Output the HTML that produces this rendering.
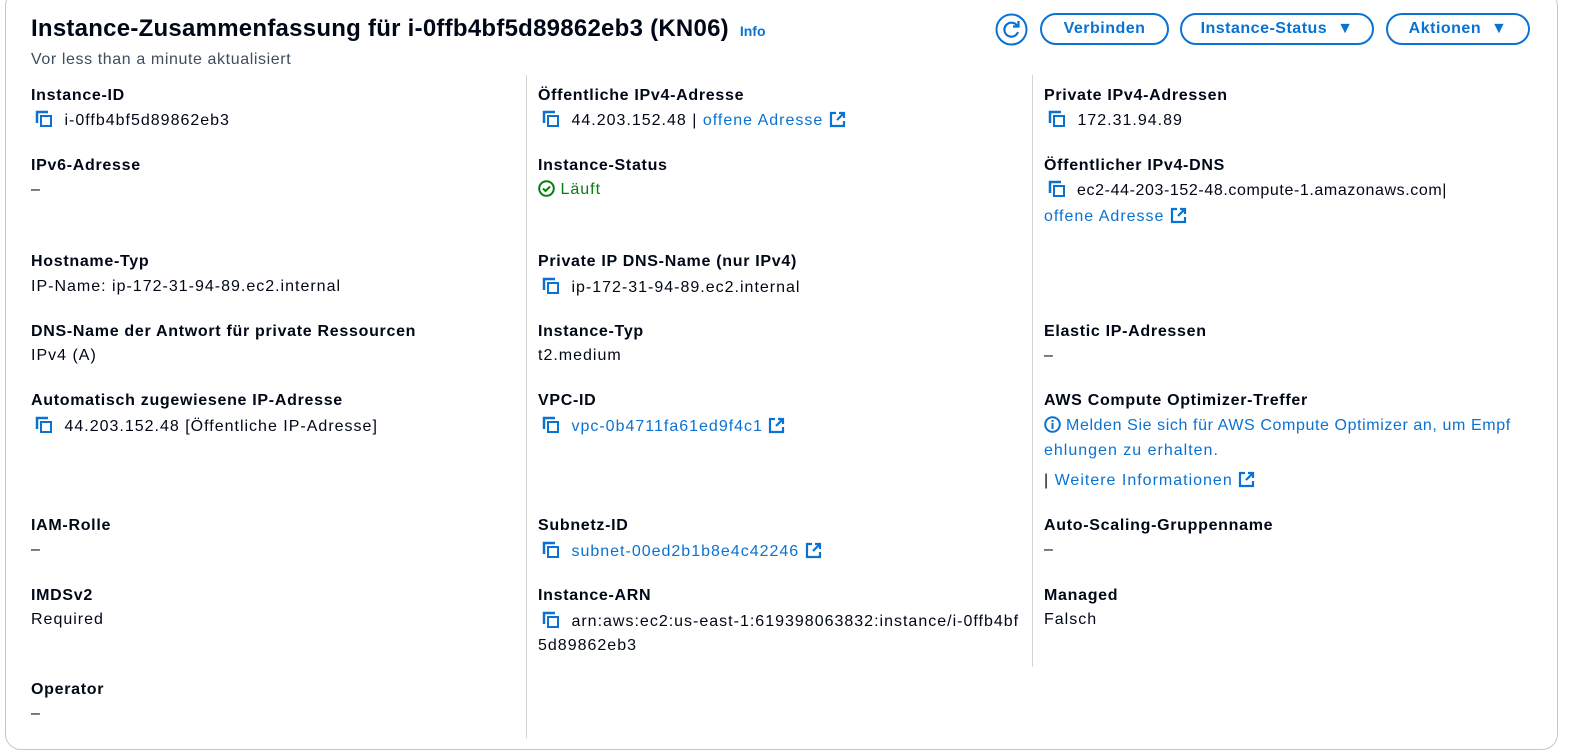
<!DOCTYPE html>
<html><head><meta charset="utf-8"><style>
body{margin:0;width:1574px;height:754px;background:#fff;font-family:"Liberation Sans",sans-serif;color:#000716;position:relative;overflow:hidden}
.card{position:absolute;left:5px;top:-10px;width:1553px;height:760px;border:1px solid #c6c6cd;border-radius:16px;box-sizing:border-box}
.a{position:absolute;white-space:nowrap;font-size:16px;line-height:20px;letter-spacing:1px}
.l{font-weight:bold;letter-spacing:0.7px}
.b{color:#0972d3}
.div{position:absolute;width:1px;background:#d5d5d9}
.btn{position:absolute;top:13px;height:32px;border:2px solid #0972d3;border-radius:18px;box-sizing:border-box;color:#0972d3;font-weight:bold;font-size:16px;letter-spacing:0.5px;line-height:28px;text-align:center}
svg{vertical-align:-3px}
.c{margin-right:6px}
</style></head><body>
<div class="card"></div>
<div class="a" style="left:31px;top:14px;font-size:24px;letter-spacing:0.25px;line-height:30px;font-weight:bold">Instance-Zusammenfassung für i-0ffb4bf5d89862eb3 (KN06) <span style="font-size:14px;letter-spacing:0;color:#0972d3;margin-left:4px">Info</span></div>
<div class="a" style="left:31px;top:50px;color:#414d5c;letter-spacing:0.6px">Vor less than a minute aktualisiert</div>

<svg style="position:absolute;left:995px;top:13px" width="33" height="33" viewBox="0 0 33 33"><circle cx="16.5" cy="16.5" r="15" fill="none" stroke="#0972d3" stroke-width="2"/><path d="M22 12.5A7 7 0 1 0 23 19" fill="none" stroke="#0972d3" stroke-width="2.2"/><path d="M23.5 8v5.5H18" fill="none" stroke="#0972d3" stroke-width="2.2"/></svg>
<div class="btn" style="left:1040px;width:129px">Verbinden</div>
<div class="btn" style="left:1180px;width:194px">Instance-Status&nbsp; ▼</div>
<div class="btn" style="left:1386px;width:144px">Aktionen&nbsp; ▼</div>

<div class="div" style="left:526px;top:75px;height:663px"></div>
<div class="div" style="left:1032px;top:75px;height:592px"></div>

<!-- col1 -->
<div class="a l" style="left:31px;top:86px">Instance-ID</div>
<div class="a" style="left:35px;top:110px"><svg class="c" width="18" height="18" viewBox="0 0 18 18"><path d="M2 13V2h11" fill="none" stroke="#0972d3" stroke-width="2.5"/><rect x="6" y="6" width="10" height="10" fill="none" stroke="#0972d3" stroke-width="2"/></svg> i-0ffb4bf5d89862eb3</div>
<div class="a l" style="left:31px;top:156px">IPv6-Adresse</div>
<div class="a" style="left:31px;top:180px">–</div>
<div class="a l" style="left:31px;top:252px">Hostname-Typ</div>
<div class="a" style="left:31px;top:277px">IP-Name: ip-172-31-94-89.ec2.internal</div>
<div class="a l" style="left:31px;top:322px">DNS-Name der Antwort für private Ressourcen</div>
<div class="a" style="left:31px;top:346px">IPv4 (A)</div>
<div class="a l" style="left:31px;top:391px">Automatisch zugewiesene IP-Adresse</div>
<div class="a" style="left:35px;top:416px"><svg class="c" width="18" height="18" viewBox="0 0 18 18"><path d="M2 13V2h11" fill="none" stroke="#0972d3" stroke-width="2.5"/><rect x="6" y="6" width="10" height="10" fill="none" stroke="#0972d3" stroke-width="2"/></svg> 44.203.152.48 [Öffentliche IP-Adresse]</div>
<div class="a l" style="left:31px;top:516px">IAM-Rolle</div>
<div class="a" style="left:31px;top:540px">–</div>
<div class="a l" style="left:31px;top:586px">IMDSv2</div>
<div class="a" style="left:31px;top:610px">Required</div>
<div class="a l" style="left:31px;top:680px">Operator</div>
<div class="a" style="left:31px;top:704px">–</div>

<!-- col2 -->
<div class="a l" style="left:538px;top:86px">Öffentliche IPv4-Adresse</div>
<div class="a" style="left:542px;top:110px"><svg class="c" width="18" height="18" viewBox="0 0 18 18"><path d="M2 13V2h11" fill="none" stroke="#0972d3" stroke-width="2.5"/><rect x="6" y="6" width="10" height="10" fill="none" stroke="#0972d3" stroke-width="2"/></svg> 44.203.152.48 | <span class="b">offene Adresse <svg width="17" height="17" viewBox="0 0 17 17"><path d="M7 2H2v13h13v-5" fill="none" stroke="#0972d3" stroke-width="2.2"/><path d="M10 2h5v5M15 2L8 9" fill="none" stroke="#0972d3" stroke-width="2.2"/></svg></span></div>
<div class="a l" style="left:538px;top:156px">Instance-Status</div>
<div class="a" style="left:538px;top:180px;color:#037f0c"><svg width="17" height="17" viewBox="0 0 17 17"><circle cx="8.5" cy="8.5" r="7.3" fill="none" stroke="#037f0c" stroke-width="2"/><path d="M5 8.5l2.5 2.5 4.5-4.5" fill="none" stroke="#037f0c" stroke-width="2"/></svg> Läuft</div>
<div class="a l" style="left:538px;top:252px">Private IP DNS-Name (nur IPv4)</div>
<div class="a" style="left:542px;top:277px"><svg class="c" width="18" height="18" viewBox="0 0 18 18"><path d="M2 13V2h11" fill="none" stroke="#0972d3" stroke-width="2.5"/><rect x="6" y="6" width="10" height="10" fill="none" stroke="#0972d3" stroke-width="2"/></svg> ip-172-31-94-89.ec2.internal</div>
<div class="a l" style="left:538px;top:322px">Instance-Typ</div>
<div class="a" style="left:538px;top:346px">t2.medium</div>
<div class="a l" style="left:538px;top:391px">VPC-ID</div>
<div class="a b" style="left:542px;top:416px"><svg class="c" width="18" height="18" viewBox="0 0 18 18"><path d="M2 13V2h11" fill="none" stroke="#0972d3" stroke-width="2.5"/><rect x="6" y="6" width="10" height="10" fill="none" stroke="#0972d3" stroke-width="2"/></svg> vpc-0b4711fa61ed9f4c1 <svg width="17" height="17" viewBox="0 0 17 17"><path d="M7 2H2v13h13v-5" fill="none" stroke="#0972d3" stroke-width="2.2"/><path d="M10 2h5v5M15 2L8 9" fill="none" stroke="#0972d3" stroke-width="2.2"/></svg></div>
<div class="a l" style="left:538px;top:516px">Subnetz-ID</div>
<div class="a b" style="left:542px;top:541px"><svg class="c" width="18" height="18" viewBox="0 0 18 18"><path d="M2 13V2h11" fill="none" stroke="#0972d3" stroke-width="2.5"/><rect x="6" y="6" width="10" height="10" fill="none" stroke="#0972d3" stroke-width="2"/></svg> subnet-00ed2b1b8e4c42246 <svg width="17" height="17" viewBox="0 0 17 17"><path d="M7 2H2v13h13v-5" fill="none" stroke="#0972d3" stroke-width="2.2"/><path d="M10 2h5v5M15 2L8 9" fill="none" stroke="#0972d3" stroke-width="2.2"/></svg></div>
<div class="a l" style="left:538px;top:586px">Instance-ARN</div>
<div class="a" style="left:542px;top:611px"><svg class="c" width="18" height="18" viewBox="0 0 18 18"><path d="M2 13V2h11" fill="none" stroke="#0972d3" stroke-width="2.5"/><rect x="6" y="6" width="10" height="10" fill="none" stroke="#0972d3" stroke-width="2"/></svg> arn:aws:ec2:us-east-1:619398063832:instance/i-0ffb4bf</div>
<div class="a" style="left:538px;top:636px">5d89862eb3</div>

<!-- col3 -->
<div class="a l" style="left:1044px;top:86px">Private IPv4-Adressen</div>
<div class="a" style="left:1048px;top:110px"><svg class="c" width="18" height="18" viewBox="0 0 18 18"><path d="M2 13V2h11" fill="none" stroke="#0972d3" stroke-width="2.5"/><rect x="6" y="6" width="10" height="10" fill="none" stroke="#0972d3" stroke-width="2"/></svg> 172.31.94.89</div>
<div class="a l" style="left:1044px;top:156px">Öffentlicher IPv4-DNS</div>
<div class="a" style="left:1048px;top:180px;letter-spacing:0.6px"><svg class="c" width="18" height="18" viewBox="0 0 18 18"><path d="M2 13V2h11" fill="none" stroke="#0972d3" stroke-width="2.5"/><rect x="6" y="6" width="10" height="10" fill="none" stroke="#0972d3" stroke-width="2"/></svg> ec2-44-203-152-48.compute-1.amazonaws.com|</div>
<div class="a b" style="left:1044px;top:207px">offene Adresse <svg width="17" height="17" viewBox="0 0 17 17"><path d="M7 2H2v13h13v-5" fill="none" stroke="#0972d3" stroke-width="2.2"/><path d="M10 2h5v5M15 2L8 9" fill="none" stroke="#0972d3" stroke-width="2.2"/></svg></div>
<div class="a l" style="left:1044px;top:322px">Elastic IP-Adressen</div>
<div class="a" style="left:1044px;top:346px">–</div>
<div class="a l" style="left:1044px;top:391px">AWS Compute Optimizer-Treffer</div>
<div class="a b" style="left:1044px;top:416px;letter-spacing:0.6px"><svg width="17" height="17" viewBox="0 0 17 17"><circle cx="8.5" cy="8.5" r="7.3" fill="none" stroke="#0972d3" stroke-width="2"/><path d="M8.5 7v6M8.5 4v2" stroke="#0972d3" stroke-width="2"/></svg> Melden Sie sich für AWS Compute Optimizer an, um Empf</div>
<div class="a b" style="left:1044px;top:441px">ehlungen zu erhalten.</div>
<div class="a" style="left:1044px;top:471px">| <span class="b">Weitere Informationen <svg width="17" height="17" viewBox="0 0 17 17"><path d="M7 2H2v13h13v-5" fill="none" stroke="#0972d3" stroke-width="2.2"/><path d="M10 2h5v5M15 2L8 9" fill="none" stroke="#0972d3" stroke-width="2.2"/></svg></span></div>
<div class="a l" style="left:1044px;top:516px">Auto-Scaling-Gruppenname</div>
<div class="a" style="left:1044px;top:540px">–</div>
<div class="a l" style="left:1044px;top:586px">Managed</div>
<div class="a" style="left:1044px;top:610px">Falsch</div>
</body></html>
